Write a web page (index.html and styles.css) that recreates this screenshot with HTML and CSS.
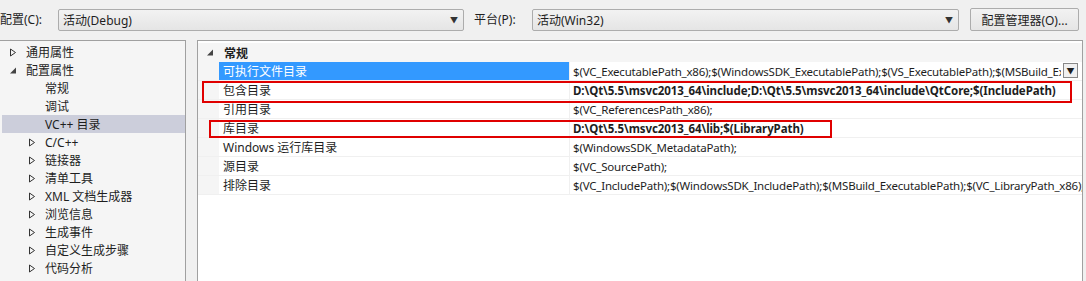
FILE: index.html
```html
<!DOCTYPE html>
<html lang="zh-CN">
<head>
    <meta charset="UTF-8">
    <link rel="stylesheet" href="styles.css">
    <title>属性页</title>
</head>
<body>

    <div class="toolbar">
        <label class="field-label">配置(C):</label>
        <div class="combo combo-config">
            <span>活动(Debug)</span>
            <span class="arrow">&#9660;</span>
        </div>
        <label class="field-label platform-label">平台(P):</label>
        <div class="combo combo-platform">
            <span>活动(Win32)</span>
            <span class="arrow">&#9660;</span>
        </div>
        <button class="manager-btn">配置管理器(O)...</button>
    </div>

    <div class="main">
        <ul class="tree">
            <li class="node"><svg class="tri" width="8" height="9"><path d="M1.5 1 L6.5 4.5 L1.5 8 Z" fill="none" stroke="#333" stroke-width="1"/></svg>通用属性</li>
            <li class="node"><svg class="tri" width="8" height="9"><path d="M1 7.5 L7 7.5 L7 1.5 Z" fill="#444"/></svg>配置属性</li>
            <li class="node leaf">常规</li>
            <li class="node leaf">调试</li>
            <li class="node leaf selected">VC++ 目录</li>
            <li class="node child"><svg class="tri" width="8" height="9"><path d="M1.5 1 L6.5 4.5 L1.5 8 Z" fill="none" stroke="#333" stroke-width="1"/></svg>C/C++</li>
            <li class="node child"><svg class="tri" width="8" height="9"><path d="M1.5 1 L6.5 4.5 L1.5 8 Z" fill="none" stroke="#333" stroke-width="1"/></svg>链接器</li>
            <li class="node child"><svg class="tri" width="8" height="9"><path d="M1.5 1 L6.5 4.5 L1.5 8 Z" fill="none" stroke="#333" stroke-width="1"/></svg>清单工具</li>
            <li class="node child"><svg class="tri" width="8" height="9"><path d="M1.5 1 L6.5 4.5 L1.5 8 Z" fill="none" stroke="#333" stroke-width="1"/></svg>XML 文档生成器</li>
            <li class="node child"><svg class="tri" width="8" height="9"><path d="M1.5 1 L6.5 4.5 L1.5 8 Z" fill="none" stroke="#333" stroke-width="1"/></svg>浏览信息</li>
            <li class="node child"><svg class="tri" width="8" height="9"><path d="M1.5 1 L6.5 4.5 L1.5 8 Z" fill="none" stroke="#333" stroke-width="1"/></svg>生成事件</li>
            <li class="node child"><svg class="tri" width="8" height="9"><path d="M1.5 1 L6.5 4.5 L1.5 8 Z" fill="none" stroke="#333" stroke-width="1"/></svg>自定义生成步骤</li>
            <li class="node child"><svg class="tri" width="8" height="9"><path d="M1.5 1 L6.5 4.5 L1.5 8 Z" fill="none" stroke="#333" stroke-width="1"/></svg>代码分析</li>
        </ul>

        <div class="grid">
            <div class="category">
                <span class="gutter"><svg width="8" height="9"><path d="M1 7.5 L7 7.5 L7 1.5 Z" fill="#444"/></svg></span>
                <span class="cat-name">常规</span>
            </div>
            <div class="prop active">
                <span class="gutter"></span>
                <span class="name">可执行文件目录</span>
                <span class="value">$(VC_ExecutablePath_x86);$(WindowsSDK_ExecutablePath);$(VS_ExecutablePath);$(MSBuild_ExecutablePath);$(SystemRoot)</span>
                <span class="drop">&#9660;</span>
            </div>
            <div class="prop">
                <span class="gutter"></span>
                <span class="name">包含目录</span>
                <span class="value bold">D:\Qt\5.5\msvc2013_64\include;D:\Qt\5.5\msvc2013_64\include\QtCore;$(IncludePath)</span>
            </div>
            <div class="prop">
                <span class="gutter"></span>
                <span class="name">引用目录</span>
                <span class="value">$(VC_ReferencesPath_x86);</span>
            </div>
            <div class="prop">
                <span class="gutter"></span>
                <span class="name">库目录</span>
                <span class="value bold">D:\Qt\5.5\msvc2013_64\lib;$(LibraryPath)</span>
            </div>
            <div class="prop">
                <span class="gutter"></span>
                <span class="name">Windows 运行库目录</span>
                <span class="value">$(WindowsSDK_MetadataPath);</span>
            </div>
            <div class="prop">
                <span class="gutter"></span>
                <span class="name">源目录</span>
                <span class="value">$(VC_SourcePath);</span>
            </div>
            <div class="prop">
                <span class="gutter"></span>
                <span class="name">排除目录</span>
                <span class="value">$(VC_IncludePath);$(WindowsSDK_IncludePath);$(MSBuild_ExecutablePath);$(VC_LibraryPath_x86);</span>
            </div>

            <div class="mark mark-include"></div>
            <div class="mark mark-lib"></div>
        </div>
    </div>

</body>
</html>
```

FILE: styles.css
```css
body {
    margin: 0;
    background: #f0f0f0;
    font-family: "Segoe UI", "Noto Sans", "Noto Sans CJK SC", sans-serif;
    font-size: 12px;
    color: #1e1e1e;
    width: 1086px;
    height: 281px;
    overflow: hidden;
}

.toolbar {
    display: flex;
    align-items: center;
    height: 40px;
    padding-bottom: 1px;
    box-sizing: border-box;
}

.field-label {
    width: 58px;
    flex: none;
    line-height: 22px;
}

.platform-label {
    margin-left: 10px;
}

.combo {
    display: flex;
    align-items: center;
    justify-content: space-between;
    height: 22px;
    box-sizing: border-box;
    border: 1px solid #acacac;
    border-radius: 2px;
    background: linear-gradient(#f2f2f2, #e5e5e5);
    padding: 0 5px 0 4px;
}

.combo-config {
    width: 406px;
}

.combo-platform {
    width: 427px;
}

.arrow {
    font-size: 8px;
    color: #333;
}

.manager-btn {
    margin-left: 11px;
    width: 109px;
    height: 23px;
    border: 1px solid #acacac;
    border-radius: 2px;
    background: linear-gradient(#f2f2f2, #e5e5e5);
    font-family: inherit;
    font-size: 12px;
    color: #1e1e1e;
    padding: 0;
}

.main {
    display: flex;
    height: 241px;
}

.tree {
    list-style: none;
    margin: 0;
    padding: 2px 0 0 0;
    width: 185px;
    flex: none;
    background: #f5f5f5;
    border-top: 1px solid #a0a0a0;
    border-right: 1px solid #a0a0a0;
}

.node {
    display: flex;
    align-items: center;
    height: 18px;
    padding-left: 9px;
    white-space: nowrap;
}

.node .tri {
    margin-right: 9px;
}

.leaf {
    padding-left: 45px;
}

.child {
    padding-left: 28px;
}

.selected {
    background: #cccedb;
    margin-left: 2px;
    padding-left: 43px;
}

.grid {
    position: relative;
    margin-left: 11px;
    width: 884px;
    background: #fff;
    border: 1px solid #a0a0a0;
    border-bottom: none;
    padding-top: 2px;
}

.gutter {
    width: 21px;
    flex: none;
    align-self: stretch;
    background: #f5f5f5;
    display: flex;
    align-items: center;
    justify-content: center;
    padding-left: 2px;
    box-sizing: border-box;
}

.category {
    display: flex;
    align-items: center;
    height: 19px;
    background: #f5f5f5;
}

.cat-name {
    font-weight: bold;
    padding-left: 5px;
}

.prop {
    display: flex;
    height: 19px;
    border-bottom: 1px solid #f0f0f0;
    box-sizing: border-box;
    align-items: center;
    position: relative;
}

.prop .name {
    width: 351px;
    flex: none;
    align-self: stretch;
    display: flex;
    align-items: center;
    padding-left: 4px;
    box-sizing: border-box;
    border-right: 1px solid #f0f0f0;
    white-space: nowrap;
}

.prop .value {
    flex: 1;
    min-width: 0;
    padding-left: 3px;
    white-space: nowrap;
    overflow: hidden;
    font-size: 11.5px;
    letter-spacing: -0.2px;
}

.prop .value.bold {
    font-weight: bold;
    letter-spacing: -0.08px;
}

.active .name {
    background: #3399ff;
    color: #fff;
}

.active .value {
    margin-right: 21px;
}

.drop {
    position: absolute;
    right: 4px;
    top: 1px;
    width: 15px;
    height: 15px;
    box-sizing: border-box;
    border: 1px solid #888;
    background: #f0f0f0;
    font-size: 8px;
    display: flex;
    align-items: center;
    justify-content: center;
}

/* red annotation boxes drawn on the screenshot */
.mark {
    position: absolute;
    border: 2px solid #e00000;
    box-sizing: border-box;
    pointer-events: none;
}

.mark-include {
    left: 4px;
    top: 40px;
    width: 870px;
    height: 22px;
}

.mark-lib {
    left: 11px;
    top: 79px;
    width: 623px;
    height: 18px;
}
```
